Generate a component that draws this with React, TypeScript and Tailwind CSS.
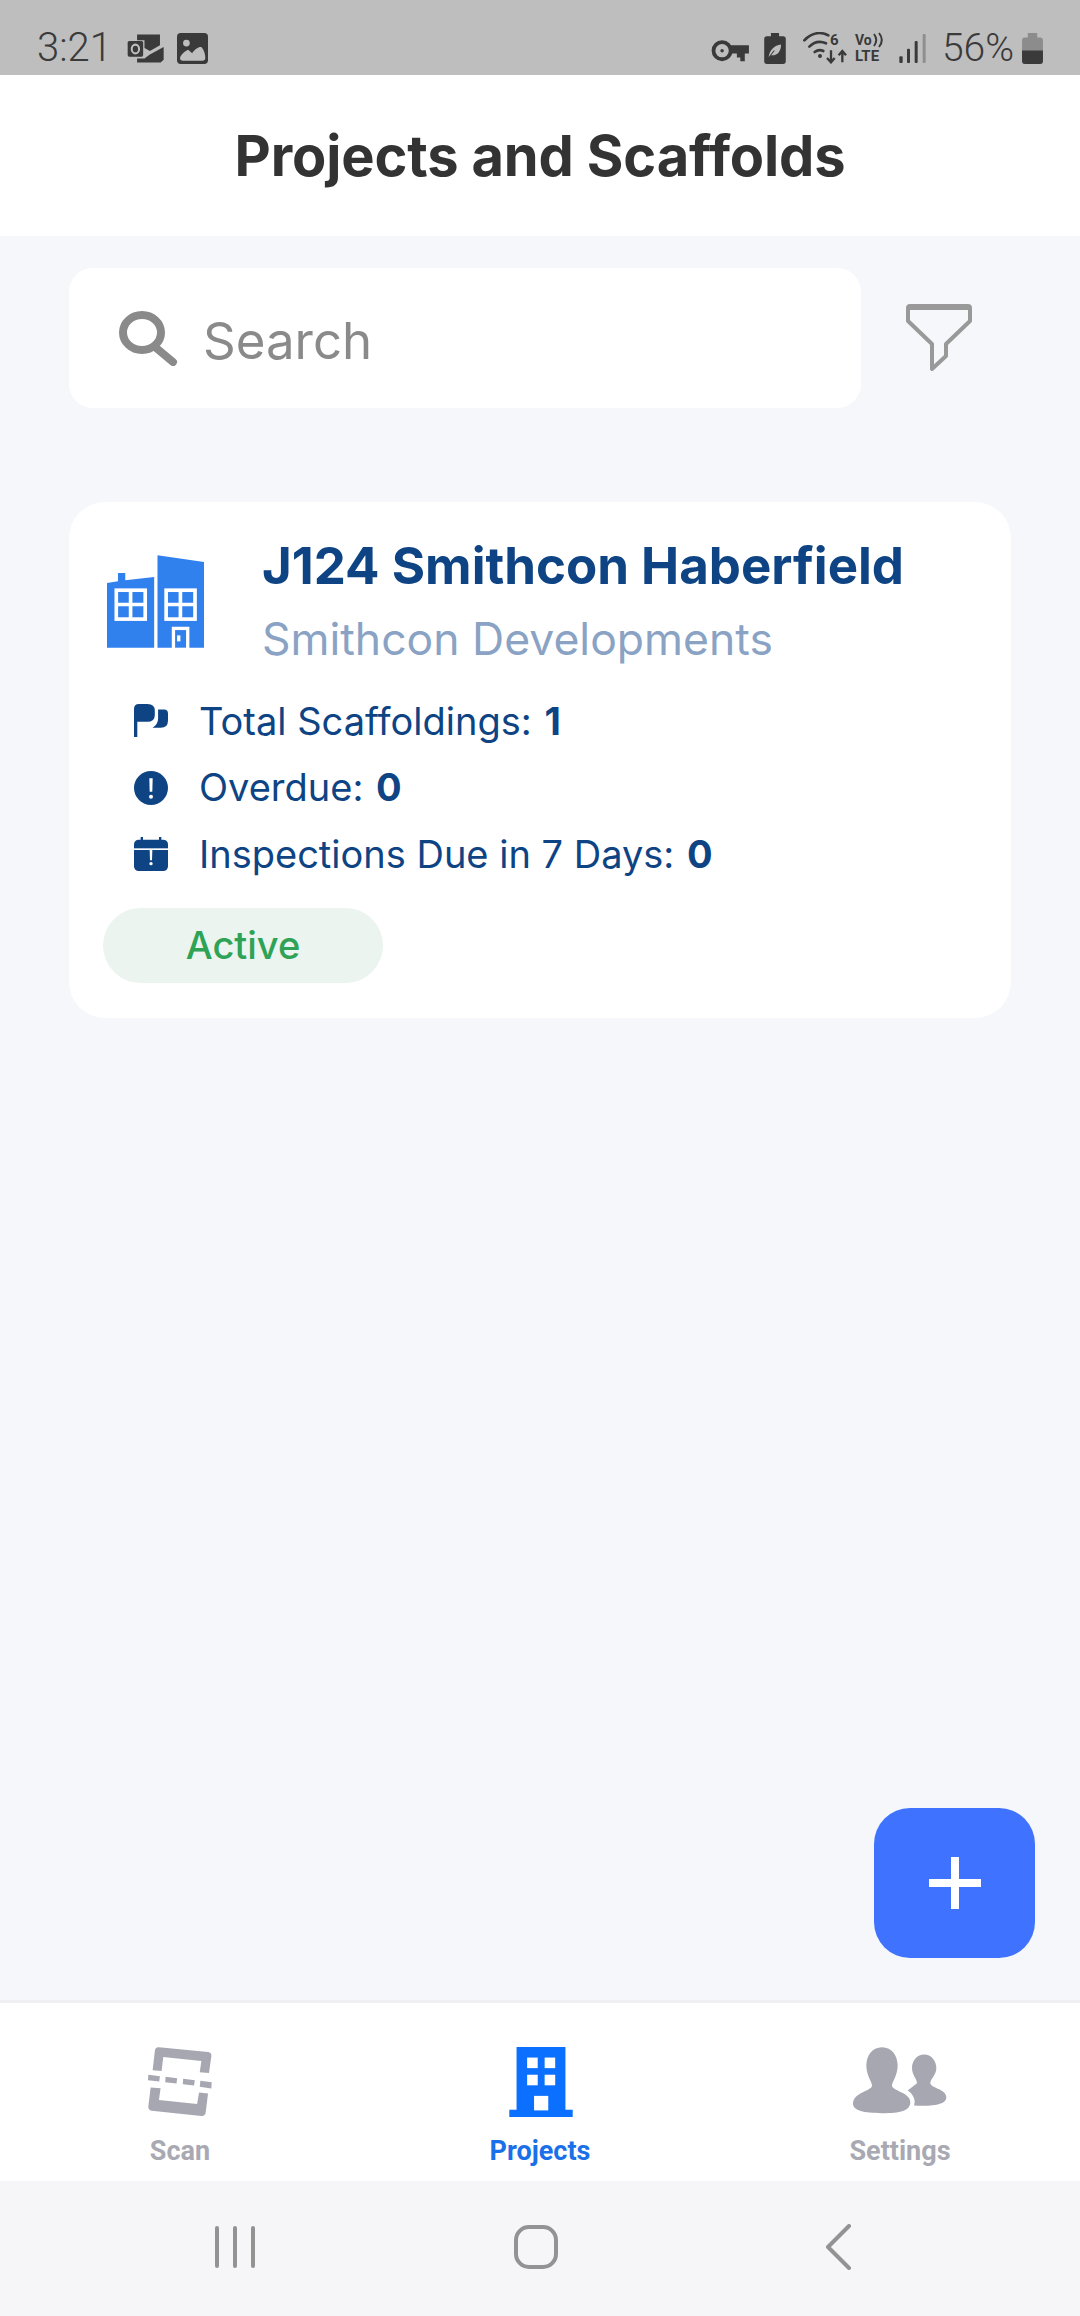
const statusDark = "#3a3a3a";

function OutlookIcon() {
  return (
    <svg width="37" height="29" viewBox="375 100 110 85">
      <path d="M405 101 H473 V133 L443 150 L427 141 V118 H405 Z" fill={statusDark} />
      <path d="M405 172 L427 172 L443 160 L484 138 V176 L475 184 H405 Z" fill={statusDark} />
      <rect x="377" y="120" width="46" height="47" rx="5" fill={statusDark} />
      <ellipse cx="400" cy="144" rx="11" ry="13" fill="none" stroke="#bebebe" strokeWidth="6" />
    </svg>
  );
}

function ImageIcon() {
  return (
    <svg width="31" height="31" viewBox="525 98 92 92">
      <rect x="525" y="98" width="92" height="92" rx="11" fill={statusDark} />
      <circle cx="553" cy="128" r="10" fill="#bebebe" />
      <path d="M534 174 C534 165 548 152 558 148 L570 158 C578 146 590 138 598 140 C604 146 609 158 609 172 Q609 180 600 180 H541 Q534 180 534 174 Z" fill="#bebebe" />
    </svg>
  );
}

function KeyIcon() {
  return (
    <svg width="38" height="22" viewBox="103 117 110 64">
      <circle cx="135" cy="148" r="25" fill="none" stroke={statusDark} strokeWidth="11" />
      <circle cx="135" cy="148" r="5" fill={statusDark} />
      <path d="M158 132 H213 V156 H201 V179 H188 V168 H178 V156 H158 Z" fill={statusDark} />
    </svg>
  );
}

function LeafBatteryIcon() {
  return (
    <svg width="22" height="31" viewBox="262 100 64 92">
      <path d="M282 100 H306 V110 H318 Q326 110 326 118 V184 Q326 192 318 192 H270 Q262 192 262 184 V118 Q262 110 270 110 H282 Z" fill={statusDark} />
      <path d="M275 172 C278 150 292 136 312 134 C312 155 300 168 283 166 Z" fill="#bebebe" />
      <path d="M272 177 L292 152" stroke={statusDark} strokeWidth="3" />
    </svg>
  );
}

function WifiIcon() {
  return (
    <div className="relative w-[44px] h-[32px]">
      <svg width="44" height="32" viewBox="378 98 130 96">
        <g fill="none" stroke={statusDark} strokeWidth="8" strokeLinecap="round">
          <path d="M381 123 C405 98 432 97 453 108" />
          <path d="M396 142 C411 127 430 125 446 132" />
          <path d="M412 158 C420 152 430 151 438 155" />
        </g>
        <circle cx="428" cy="170" r="6" fill={statusDark} />
        <path d="M461 153 V186 M449 176 L461 189 L472 176 M495 189 V158 M484 168 L495 155 L506 168" fill="none" stroke={statusDark} strokeWidth="7" />
      </svg>
      <span className="absolute left-[27px] top-[1px] text-[15px] leading-[15px] font-bold">6</span>
    </div>
  );
}

function VoLteIcon() {
  return (
    <div className="w-[31px] h-[32px] flex flex-col font-bold">
      <div className="h-[16px] flex items-center">
        <span className="text-[14px] leading-[16px]">Vo</span>
        <svg width="10" height="16" viewBox="0 0 10 16" className="ml-[1px]">
          <path d="M1 2 C4 6 4 10 1 14 M6 1 C10 6 10 10 6 15" fill="none" stroke={statusDark} strokeWidth="2" />
        </svg>
      </div>
      <span className="text-[15px] leading-[16px]">LTE</span>
    </div>
  );
}

function SignalIcon() {
  return (
    <svg width="27" height="29" viewBox="666 101 81 87">
      <rect x="667" y="168" width="10" height="20" rx="3" fill={statusDark} />
      <rect x="690" y="145" width="9" height="43" rx="3" fill={statusDark} />
      <rect x="713" y="122" width="9" height="66" rx="3" fill={statusDark} />
      <rect x="737" y="101" width="9" height="87" rx="3" fill="#8f8f8f" />
    </svg>
  );
}

function BatteryIcon() {
  return (
    <svg width="21" height="31" viewBox="1027 97 62 92">
      <path d="M1044 97 H1072 V110 H1080 Q1089 110 1089 119 V180 Q1089 189 1080 189 H1036 Q1027 189 1027 180 V119 Q1027 110 1036 110 H1044 Z" fill="#8c8c8c" />
      <path d="M1027 149 H1089 V180 Q1089 189 1080 189 H1036 Q1027 189 1027 180 Z" fill={statusDark} />
    </svg>
  );
}

function SearchIcon() {
  return (
    <svg width="59" height="55" viewBox="0 0 59 55" className="shrink-0">
      <ellipse cx="23" cy="21.5" rx="19" ry="17.5" fill="none" stroke="#8a8a8a" strokeWidth="8" />
      <path d="M36 36 L54 51" stroke="#8a8a8a" strokeWidth="8" strokeLinecap="round" />
    </svg>
  );
}

function FilterIcon() {
  return (
    <svg width="66" height="67" viewBox="0 0 66 67">
      <path d="M4 2 H62 Q64 2 64 4 V17 L40 40 V52 L26 65 V40 L2 17 V4 Q2 2 4 2 Z" fill="none" stroke="#999999" strokeWidth="4" strokeLinejoin="round" />
      <rect x="2" y="1" width="62" height="5" rx="2" fill="#999999" />
    </svg>
  );
}

function ProjectBuildingIcon() {
  return (
    <svg width="97" height="93" viewBox="140 165 292 278" className="shrink-0 mt-[19px]">
      <path d="M140 248 L173 243 V218 H195 V240 L282 230 V443 H140 Z" fill="#3080ee" />
      <path d="M292 165 L432 185 V443 H388 V380 H335 V443 H292 Z" fill="#3080ee" />
      <g fill="none" stroke="#ffffff" strokeWidth="11">
        <rect x="168" y="270" width="87" height="87" />
        <path d="M211 270 V357 M168 313 H255" />
        <rect x="318" y="270" width="87" height="87" />
        <path d="M361 270 V357 M318 313 H405" />
      </g>
      <rect x="345" y="390" width="33" height="53" fill="#3080ee" />
      <rect x="351" y="406" width="10" height="18" fill="#ffffff" />
    </svg>
  );
}

function FlagIcon() {
  return (
    <svg width="34" height="34" viewBox="132 43 103 103">
      <path d="M132 143 V58 Q132 43 147 43 H173 Q195 43 195 63 V77 Q195 97 172 97 H142 V143 Z" fill="#0e4484" />
      <path d="M205 60 H223 Q235 60 235 72 V93 Q235 115 213 115 H188 Q205 105 205 88 Z" fill="#0e4484" />
    </svg>
  );
}

function AlertIcon() {
  return (
    <svg width="34" height="34" viewBox="0 0 102 102">
      <circle cx="51" cy="51" r="51" fill="#0e4484" />
      <path d="M46 22 H56 L55 62 H47 Z" fill="#ffffff" />
      <circle cx="51" cy="77" r="6" fill="#ffffff" />
    </svg>
  );
}

function CalendarAlertIcon() {
  return (
    <svg width="34" height="34" viewBox="0 0 102 102">
      <rect x="0" y="8" width="102" height="94" rx="14" fill="#0e4484" />
      <rect x="20" y="0" width="7" height="14" fill="#0e4484" />
      <rect x="75" y="0" width="7" height="14" fill="#0e4484" />
      <rect x="0" y="34" width="102" height="5" fill="#ffffff" />
      <path d="M47 39 H55 L54 70 H48 Z" fill="#ffffff" />
      <circle cx="51" cy="80" r="5" fill="#ffffff" />
    </svg>
  );
}

function ScanIcon() {
  return (
    <svg width="64" height="69" viewBox="145 140 191 208" fill="#a6a7b0">
      <path d="M158 210 L165 150 Q167 140 177 141 L325 155 Q336 157 335 167 L328 218 L300 216 L305 182 L190 170 L185 212 Z" />
      <path d="M152 262 L145 320 Q145 330 155 332 L305 348 Q317 349 318 337 L325 280 L298 277 L292 312 L177 300 L182 264 Z" />
      <path d="M145 224 L180 228 L178 244 L144 240 Z" />
      <path d="M197 230 L232 234 L230 250 L196 246 Z" />
      <path d="M250 236 L285 240 L283 256 L249 252 Z" />
      <path d="M302 242 L336 246 L335 265 L300 260 Z" />
    </svg>
  );
}

function TabBuildingIcon() {
  return (
    <svg width="64" height="70" viewBox="1230 140 192 212" className="ml-[2px]">
      <rect x="1252" y="140" width="148" height="195" fill="#0b6fff" />
      <rect x="1230" y="330" width="192" height="22" fill="#0b6fff" />
      <g fill="#ffffff">
        <rect x="1284" y="172" width="32" height="32" />
        <rect x="1337" y="172" width="32" height="32" />
        <rect x="1284" y="224" width="32" height="32" />
        <rect x="1337" y="224" width="32" height="32" />
        <rect x="1305" y="288" width="43" height="44" />
      </g>
    </svg>
  );
}

function PeopleIcon() {
  return (
    <svg width="94" height="67" viewBox="758 800 282 200" fill="#a6a7b0">
      <path d="M845 800 C815 800 798 825 798 855 C798 885 815 905 815 915 C815 932 758 935 758 970 C758 990 790 998 845 998 C900 998 930 990 930 965 C930 935 875 932 875 915 C875 905 892 885 892 855 C892 825 875 800 845 800 Z" />
      <path d="M972 822 C950 822 935 840 935 862 C935 885 950 895 950 908 L922 930 C940 942 947 960 941 975 C1000 978 1038 972 1038 950 C1038 925 990 922 990 908 C990 895 1008 885 1008 862 C1008 840 992 822 972 822 Z" />
    </svg>
  );
}

const stats = [
  { label: "Total Scaffoldings:", value: "1", icon: <FlagIcon /> },
  { label: "Overdue:", value: "0", icon: <AlertIcon /> },
  { label: "Inspections Due in 7 Days:", value: "0", icon: <CalendarAlertIcon /> },
];

const tabs = [
  { label: "Scan", icon: <ScanIcon />, color: "text-[#a8a9b2]" },
  { label: "Projects", icon: <TabBuildingIcon />, color: "text-[#1a70e8]" },
  { label: "Settings", icon: <PeopleIcon />, color: "text-[#a8a9b2]" },
];

export default function App() {
  return (
    <div className="w-[1080px] h-[2316px] flex flex-col bg-[#f5f7fb] font-['Inter',sans-serif] overflow-hidden">
      {/* Status bar */}
      <div className="h-[75px] shrink-0 bg-[#bebebe] flex items-start justify-between pl-[37px] pr-[37px] pt-[32px] font-['Roboto',sans-serif] text-[#3a3a3a]">
        <div className="flex items-center">
          <span className="text-[40px] leading-[32px] font-light mr-[15px]">3:21</span>
          <span className="mr-[13px] flex"><OutlookIcon /></span>
          <ImageIcon />
        </div>
        <div className="flex items-center">
          <span className="mr-[15px] flex mt-[6px]"><KeyIcon /></span>
          <span className="mr-[17px] flex"><LeafBatteryIcon /></span>
          <span className="mr-[8px] flex"><WifiIcon /></span>
          <span className="mr-[13px] flex"><VoLteIcon /></span>
          <span className="mr-[16px] flex"><SignalIcon /></span>
          <span className="text-[39px] leading-[32px] font-light mr-[8px]">56%</span>
          <BatteryIcon />
        </div>
      </div>

      {/* Header */}
      <header className="h-[161px] shrink-0 bg-white flex items-center justify-center">
        <h1 className="text-[56px] font-bold text-[#333333] tracking-[-0.15px]">Projects and Scaffolds</h1>
      </header>

      <main className="relative flex-1 pl-[69px] pt-[32px]">
        {/* Search */}
        <div className="flex items-center">
          <div className="w-[792px] h-[140px] bg-white rounded-[24px] flex items-center pl-[50px]">
            <SearchIcon />
            <span className="ml-[25px] mt-[6px] text-[51px] text-[#8a8a8a]">Search</span>
          </div>
          <span className="ml-[45px] flex mt-[-2px]"><FilterIcon /></span>
        </div>

        {/* Project card */}
        <div className="mt-[94px] w-[942px] h-[516px] bg-white rounded-[36px] pt-[34px]">
          <div className="flex items-start pl-[38px]">
            <ProjectBuildingIcon />
            <div className="ml-[58px]">
              <div className="text-[51px] leading-[60px] font-bold text-[#0e4484]">J124 Smithcon Haberfield</div>
              <div className="mt-[13px] text-[44.5px] leading-[60px] text-[#8aa3c4]">Smithcon Developments</div>
            </div>
          </div>
          <div className="mt-[19px] pl-[65px]">
            {stats.map((stat) => (
              <div key={stat.label} className="h-[66.5px] flex items-center">
                {stat.icon}
                <span className="ml-[31px] text-[38px] text-[#0e4484]">
                  {stat.label} <span className="font-bold ml-[2px]">{stat.value}</span>
                </span>
              </div>
            ))}
          </div>
          <div className="mt-[20px] ml-[34px] w-[280px] h-[75px] rounded-full bg-[#ebf4ee] flex items-center justify-center text-[38px] font-medium text-[#2ea356]">
            Active
          </div>
        </div>

        {/* Add button */}
        <button className="absolute right-[45px] bottom-[42px] w-[161px] h-[150px] rounded-[36px] bg-[#3e72ff] flex items-center justify-center">
          <svg width="52" height="52" viewBox="0 0 52 52">
            <path d="M22 0 H30 V22 H52 V30 H30 V52 H22 V30 H0 V22 H22 Z" fill="#ffffff" />
          </svg>
        </button>
      </main>

      {/* Tabs */}
      <nav className="h-[181px] shrink-0 bg-white border-t-[3px] border-[#f0f0f3] grid grid-cols-3 font-['Roboto',sans-serif]">
        {tabs.map((tab) => (
          <div key={tab.label} className="flex flex-col items-center pt-[44px]">
            <div className="h-[70px] flex items-start">{tab.icon}</div>
            <span className={`mt-[17px] text-[27px] leading-[34px] font-bold ${tab.color}`}>{tab.label}</span>
          </div>
        ))}
      </nav>

      {/* Android nav bar */}
      <div className="h-[135px] shrink-0 bg-[#f6f6f9] flex items-center pl-[215px] pb-[4px]">
        <div className="flex gap-[14px]">
          <span className="w-[4px] h-[42px] rounded-full bg-[#939393]" />
          <span className="w-[4px] h-[42px] rounded-full bg-[#939393]" />
          <span className="w-[4px] h-[42px] rounded-full bg-[#939393]" />
        </div>
        <span className="ml-[259px] w-[44px] h-[44px] rounded-[15px] border-[4px] border-[#939393]" />
        <svg width="26" height="46" viewBox="0 0 26 46" className="ml-[267px]">
          <path d="M24 2 L3 23 L24 44" fill="none" stroke="#939393" strokeWidth="4" strokeLinecap="round" strokeLinejoin="round" />
        </svg>
      </div>
    </div>
  );
}
